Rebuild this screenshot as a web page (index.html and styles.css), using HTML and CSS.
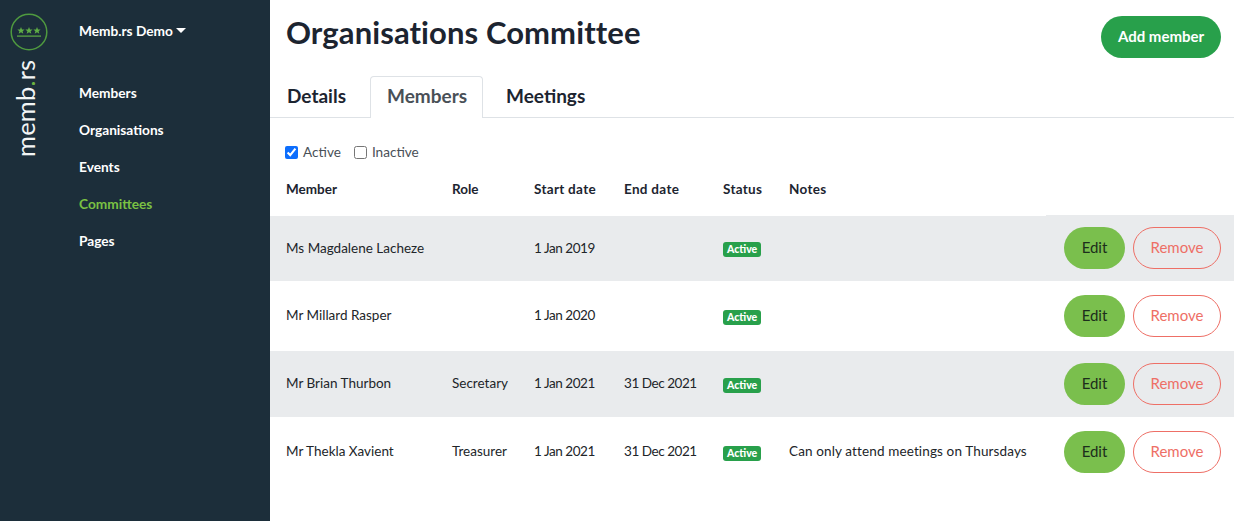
FILE: index.html
```html
<!DOCTYPE html>
<html lang="en">
<head>
<meta charset="utf-8">
<title>Organisations Committee</title>
<link rel="stylesheet" href="styles.css">
</head>
<body>
<div class="app">
  <aside class="brand">
    <svg class="logo" width="38" height="38" viewBox="0 0 38 38">
      <circle cx="19" cy="19" r="17.8" fill="none" stroke="#4f9a3f" stroke-width="1.5"/>
      <g fill="#5fae45">
        <path d="M11 14l1 2.4 2.6.2-2 1.6.7 2.5-2.3-1.4-2.3 1.4.7-2.5-2-1.6 2.6-.2z"/>
        <path d="M19 14l1 2.4 2.6.2-2 1.6.7 2.5-2.3-1.4-2.3 1.4.7-2.5-2-1.6 2.6-.2z"/>
        <path d="M27 14l1 2.4 2.6.2-2 1.6.7 2.5-2.3-1.4-2.3 1.4.7-2.5-2-1.6 2.6-.2z"/>
        <rect x="7" y="22.5" width="24" height="1.2"/>
      </g>
    </svg>
    <div class="wordmark">memb<span class="dot">.</span>rs</div>
  </aside>
  <nav class="side">
    <div class="org">Memb.rs Demo<span class="caret"></span></div>
    <ul class="menu">
      <li>Members</li>
      <li>Organisations</li>
      <li>Events</li>
      <li class="current">Committees</li>
      <li>Pages</li>
    </ul>
  </nav>
  <main class="main">
    <header class="head">
      <h1>Organisations Committee</h1>
      <button class="add">Add member</button>
    </header>
    <div class="tabs">
      <span class="tab">Details</span>
      <span class="tab active">Members</span>
      <span class="tab">Meetings</span>
    </div>
    <div class="filters">
      <label class="check"><input type="checkbox" checked>Active</label>
      <label class="check"><input type="checkbox">Inactive</label>
    </div>
    <table>
      <thead>
        <tr><th class="c1">Member</th><th class="c2">Role</th><th class="c3">Start date</th><th class="c4">End date</th><th class="c5">Status</th><th class="c6">Notes</th><th></th></tr>
      </thead>
      <tbody>
        <tr class="odd"><td>Ms Magdalene Lacheze</td><td></td><td class="date">1 Jan 2019</td><td class="date"></td><td class="state"><span class="badge">Active</span></td><td class="note"></td><td class="acts"><button class="edit">Edit</button><button class="remove">Remove</button></td></tr>
        <tr class="even"><td>Mr Millard Rasper</td><td></td><td class="date">1 Jan 2020</td><td class="date"></td><td class="state"><span class="badge">Active</span></td><td class="note"></td><td class="acts"><button class="edit">Edit</button><button class="remove">Remove</button></td></tr>
        <tr class="odd"><td>Mr Brian Thurbon</td><td>Secretary</td><td class="date">1 Jan 2021</td><td class="date">31 Dec 2021</td><td class="state"><span class="badge">Active</span></td><td class="note"></td><td class="acts"><button class="edit">Edit</button><button class="remove">Remove</button></td></tr>
        <tr class="even"><td>Mr Thekla Xavient</td><td>Treasurer</td><td class="date">1 Jan 2021</td><td class="date">31 Dec 2021</td><td class="state"><span class="badge">Active</span></td><td class="note">Can only attend meetings on Thursdays</td><td class="acts"><button class="edit">Edit</button><button class="remove">Remove</button></td></tr>
      </tbody>
    </table>
  </main>
</div>
</body>
</html>
```
FILE: styles.css
```css
* { box-sizing: border-box; }
html, body { margin: 0; height: 100%; }
body { font-family: Lato, "Noto Sans", sans-serif; color: #212529; background: #fff; overflow: hidden; }
.app { display: flex; height: 521px; }
.brand { width: 55px; flex: none; background: #1c2e3a; padding: 13px 0 0 10px; display: flex; flex-direction: column; }
.logo { display: block; }
.wordmark { writing-mode: vertical-rl; transform: rotate(180deg); font-size: 25.5px; line-height: 36px; color: #f2f5f5; margin: 4px 0 0 -3px; height: 102px; text-align: left; font-weight: 400; letter-spacing: .2px; }
.dot { color: #6cb33f; }
.side { width: 215px; flex: none; background: #1c2e3a; padding: 22px 0 0 24px; color: #fff; font-size: 13.7px; font-weight: 700; }
.org { line-height: 18px; }
.caret { display: inline-block; border: 5px solid transparent; border-top-color: #fff; border-bottom: 0; margin-left: 3px; vertical-align: 3px; }
.menu { list-style: none; margin: 34px 0 0; padding: 0; }
.menu li { height: 37px; line-height: 37px; }
.menu .current { color: #7ac143; }
.main { flex: 1; min-width: 0; }
.head { display: flex; justify-content: space-between; padding: 14px 13px 0 16px; height: 76px; }
.head .add { margin-top: 2px; }
h1 { margin: 0; font-size: 31px; line-height: 36px; font-weight: 700; color: #1c2430; letter-spacing: .09px; }
.add { width: 120px; height: 42px; border: 0; border-radius: 21px; background: #28a04b; color: #fff; font: 700 15px Lato, sans-serif; padding: 0 0 3px; }
.tabs { display: flex; height: 42px; border-bottom: 1px solid #dee2e6; padding-left: 1px; }
.tab { height: 42px; padding: 0 16px; line-height: 38px; font-size: 19px; font-weight: 700; color: #1c2430; border: 1px solid transparent; border-bottom: 0; }
.tab:first-child { padding-left: 15px; padding-right: 17px; }
.tab.active { color: #495057; background: #fff; border-color: #dee2e6; border-radius: 4px 4px 0 0; margin-left: 6px; margin-right: 6px; padding-right: 15px; }
.filters { display: flex; gap: 13px; padding: 25px 0 0 15px; height: 52px; font-size: 13.6px; color: #495057; }
.check { display: flex; align-items: center; height: 18px; gap: 5px; }
.check input { width: 13px; height: 13px; margin: 0; accent-color: #0d6efd; }
table { border-collapse: collapse; width: 964px; table-layout: fixed; font-size: 13.5px; }
th { height: 45px; text-align: left; font-weight: 700; padding: 0 0 8px; color: #1c2430; vertical-align: middle; }
th, td { white-space: nowrap; }
th:first-child, td:first-child { padding-left: 16px; }
.c1 { width: 182px; }
.c2 { width: 82px; }
.c3 { width: 90px; }
.c4 { width: 99px; }
.c5 { width: 66px; }
.c6 { width: 257px; }
.c3, .c4, .c5, .c6 { letter-spacing: .3px; }
td { padding: 0 0 2px; vertical-align: middle; color: #212529; }
.odd td { height: 66px; background: #e9ebed; }
.even td { height: 70px; }
.date { letter-spacing: -.45px; }
.note { letter-spacing: .13px; }
tbody tr:first-child td:not(.acts):not(.state) { padding-bottom: 1px; }
tbody tr:first-child td:not(.acts) { box-shadow: inset 0 1px #fff; }
.badge { display: inline-block; height: 15px; line-height: 15px; padding: 0 4px; border-radius: 3px; background: #28a04b; color: #fff; font-size: 10.5px; font-weight: 900; vertical-align: middle; margin-top: 4px; }
td.acts { padding: 0 13px 0 0; text-align: right; }
.edit, .remove { height: 42px; border-radius: 21px; font: 400 15px Lato, sans-serif; vertical-align: middle; padding: 0 0 2px; }
.edit { width: 61px; border: 0; background: #7abf4d; color: #1c2e1c; margin-right: 8px; }
.remove { width: 88px; border: 1px solid #ee6f66; background: transparent; color: #ee6f66; }
```
